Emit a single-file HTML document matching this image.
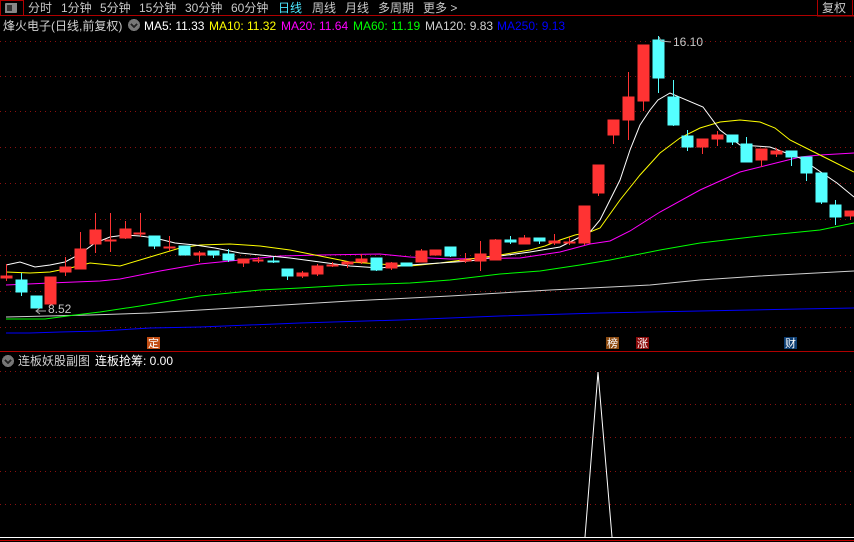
<!DOCTYPE html>
<html><head><meta charset="utf-8"><style>
html,body{margin:0;padding:0;background:#000;}
body{width:854px;height:542px;overflow:hidden;position:relative;font-family:"Liberation Sans","Noto Sans CJK SC",sans-serif;}
svg{position:absolute;left:0;top:0;}
text{font-family:"Liberation Sans","Noto Sans CJK SC",sans-serif;font-size:12px;}
</style></head><body>
<svg width="854" height="542" viewBox="0 0 854 542" shape-rendering="crispEdges">
<!-- top bar -->
<rect x="0.5" y="0.5" width="23" height="15" fill="none" stroke="#b00000"/>
<rect x="5" y="3" width="12" height="10" fill="#888" rx="1"/><rect x="7" y="5" width="5" height="6" fill="#333"/>
<line x1="0" y1="15.5" x2="854" y2="15.5" stroke="#b00000"/>
<rect x="817.5" y="-1" width="40" height="17" fill="none" stroke="#b00000"/>
<line x1="852.5" y1="0" x2="852.5" y2="15" stroke="#b00000"/>
<g fill="#c8c8c8">
<text x="28" y="12">分时</text><text x="61" y="12">1分钟</text><text x="100" y="12">5分钟</text><text x="139" y="12">15分钟</text><text x="185" y="12">30分钟</text><text x="231" y="12">60分钟</text>
<text x="278" y="12" fill="#4de8ff">日线</text><text x="312" y="12">周线</text><text x="345" y="12">月线</text><text x="378" y="12">多周期</text><text x="423" y="12">更多 &gt;</text>
<text x="822" y="12">复权</text>
</g>
<!-- title row -->
<text x="3" y="30" fill="#d0d0d0">烽火电子(日线,前复权)</text>
<circle cx="134" cy="25" r="6" fill="#777"/><path d="M131 24 L134 27 L137 24" stroke="#222" stroke-width="1.5" fill="none"/>
<text x="144" y="30" fill="#fff">MA5: 11.33</text>
<text x="209" y="30" fill="#ffff00">MA10: 11.32</text>
<text x="281" y="30" fill="#ff00ff">MA20: 11.64</text>
<text x="353" y="30" fill="#00ff00">MA60: 11.19</text>
<text x="425" y="30" fill="#d0d0d0">MA120: 9.83</text>
<text x="497" y="30" fill="#0000ff">MA250: 9.13</text>
<!-- grid -->
<g stroke="#8b1010" stroke-dasharray="1,4">
<line x1="0" y1="41.5" x2="854" y2="41.5"/><line x1="0" y1="76.5" x2="854" y2="76.5"/><line x1="0" y1="111.5" x2="854" y2="111.5"/><line x1="0" y1="147.5" x2="854" y2="147.5"/><line x1="0" y1="183.5" x2="854" y2="183.5"/><line x1="0" y1="219.5" x2="854" y2="219.5"/><line x1="0" y1="255.5" x2="854" y2="255.5"/><line x1="0" y1="291.5" x2="854" y2="291.5"/><line x1="0" y1="327.5" x2="854" y2="327.5"/>
<line x1="0" y1="371.5" x2="854" y2="371.5"/><line x1="0" y1="404.5" x2="854" y2="404.5"/><line x1="0" y1="437.5" x2="854" y2="437.5"/><line x1="0" y1="471.5" x2="854" y2="471.5"/><line x1="0" y1="504.5" x2="854" y2="504.5"/>
</g>
<!-- MA lines -->
<g fill="none" stroke-width="1" shape-rendering="auto">
<polyline stroke="#0000ff" points="6,333 30,333 60,332 100,331 150,328 200,327 300,323 400,320 500,316 600,313 700,311 800,309 854,308"/>
<polyline stroke="#d0d0d0" points="6,317 90,315 150,313 250,307 350,301 450,296 550,290 650,285 700,280 760,276 854,271"/>
<polyline stroke="#00ff00" points="6,319 45,319 60,317 75,315 100,312 140,306 200,296 260,290 300,288 350,285 410,283 450,280 500,274 540,271 580,265 610,260 660,250 700,243 760,236 820,230 854,223"/>
<polyline stroke="#ff00ff" points="6,285 50,283 100,281 120,279 160,271 200,264 240,260 280,256 320,255 380,254 410,257 450,259 520,258 560,252 590,244 610,241 630,231 660,212 700,190 740,172 780,162 800,157 820,155 854,153"/>
<polyline stroke="#ffff00" points="6,272 30,273 50,272 70,268 90,263 120,266 150,257 180,248 200,245 230,244 260,246 290,250 320,256 350,262 380,264 410,266 440,263 470,259 500,255 530,250 545,246 560,240 575,235 590,232 600,228 620,200 640,175 660,153 680,138 700,128 720,122 740,120 760,122 775,128 790,140 810,150 830,160 854,172"/>
<polyline stroke="#ffffff" points="6,265 20,262 35,267 50,265 65,262 80,254 95,243 110,237 125,235 140,236 155,238 175,243 195,245 215,248 240,253 260,255 290,258 320,262 350,266 380,268 410,265 440,263 470,261 500,256 530,252 560,247 570,242 590,232 600,220 620,180 630,150 640,125 650,110 658,100 670,93 703,107 720,130 740,145 770,147 800,158 837,183 854,197"/>
</g>
<!-- candles -->
<g id="c">
<!-- red -->
<g fill="#ff3333" stroke="#ff3333">
<line x1="6.5" y1="264" x2="6.5" y2="281"/><rect x="1" y="276" width="11" height="2"/>
<line x1="50.5" y1="277" x2="50.5" y2="306"/><rect x="45" y="277" width="11" height="27"/>
<line x1="65.5" y1="257" x2="65.5" y2="276"/><rect x="60" y="267" width="11" height="5"/>
<line x1="80.5" y1="232" x2="80.5" y2="269"/><rect x="75" y="249" width="11" height="20"/>
<line x1="95.5" y1="213" x2="95.5" y2="253"/><rect x="90" y="230" width="11" height="14"/>
<line x1="110.5" y1="213" x2="110.5" y2="252"/><rect x="105" y="240" width="11" height="1"/>
<line x1="125.5" y1="221" x2="125.5" y2="239"/><rect x="120" y="229" width="11" height="9"/>
<line x1="140.5" y1="213" x2="140.5" y2="237"/><rect x="134" y="233" width="11" height="1"/>
<line x1="169.5" y1="236" x2="169.5" y2="251"/><rect x="164" y="247" width="11" height="1"/>
<line x1="199.5" y1="251" x2="199.5" y2="262"/><rect x="194" y="253" width="11" height="2"/>
<line x1="243.5" y1="259" x2="243.5" y2="267"/><rect x="238" y="259" width="11" height="4"/>
<line x1="258.5" y1="257" x2="258.5" y2="263"/><rect x="253" y="260" width="10" height="1"/>
<line x1="302.5" y1="271" x2="302.5" y2="278"/><rect x="297" y="273" width="11" height="3"/>
<line x1="317.5" y1="264" x2="317.5" y2="276"/><rect x="312" y="266" width="11" height="8"/>
<line x1="332.5" y1="262" x2="332.5" y2="267"/><rect x="327" y="265" width="11" height="1"/>
<line x1="347.5" y1="262" x2="347.5" y2="268"/><rect x="342" y="262" width="11" height="2"/>
<line x1="361.5" y1="254" x2="361.5" y2="264"/><rect x="356" y="259" width="11" height="3"/>
<line x1="391.5" y1="262" x2="391.5" y2="270"/><rect x="386" y="263" width="11" height="5"/>
<line x1="421.5" y1="249" x2="421.5" y2="262"/><rect x="416" y="251" width="11" height="11"/>
<rect x="430" y="250" width="11" height="5"/>
<line x1="465.5" y1="253" x2="465.5" y2="263"/><rect x="460" y="260" width="11" height="1"/>
<line x1="480.5" y1="241" x2="480.5" y2="271"/><rect x="475" y="254" width="11" height="7"/>
<line x1="495.5" y1="239" x2="495.5" y2="260"/><rect x="490" y="240" width="11" height="20"/>
<line x1="524.5" y1="235" x2="524.5" y2="244"/><rect x="519" y="238" width="11" height="6"/>
<line x1="554.5" y1="234" x2="554.5" y2="245"/><rect x="549" y="241" width="11" height="2"/>
<line x1="569.5" y1="237" x2="569.5" y2="245"/><rect x="564" y="242" width="11" height="1"/>
<line x1="584.5" y1="206" x2="584.5" y2="245"/><rect x="579" y="206" width="11" height="37"/>
<line x1="598.5" y1="165" x2="598.5" y2="196"/><rect x="593" y="165" width="11" height="28"/>
<line x1="613.5" y1="120" x2="613.5" y2="144"/><rect x="608" y="120" width="11" height="15"/>
<line x1="628.5" y1="72" x2="628.5" y2="140"/><rect x="623" y="97" width="11" height="23"/>
<line x1="643.5" y1="45" x2="643.5" y2="111"/><rect x="638" y="45" width="11" height="56"/>
<line x1="702.5" y1="139" x2="702.5" y2="154"/><rect x="697" y="139" width="11" height="8"/>
<line x1="717.5" y1="131" x2="717.5" y2="146"/><rect x="712" y="135" width="11" height="4"/>
<line x1="761.5" y1="149" x2="761.5" y2="167"/><rect x="756" y="149" width="11" height="11"/>
<line x1="776.5" y1="148" x2="776.5" y2="157"/><rect x="771" y="151" width="11" height="3"/>
<line x1="850.5" y1="211" x2="850.5" y2="220"/><rect x="845" y="211" width="11" height="5"/>
</g>
<!-- cyan -->
<g fill="#54ffff" stroke="#54ffff">
<line x1="21.5" y1="273" x2="21.5" y2="296"/><rect x="16" y="280" width="11" height="12"/>
<rect x="31" y="296" width="11" height="12"/>
<line x1="154.5" y1="236" x2="154.5" y2="249"/><rect x="149" y="236" width="11" height="10"/>
<rect x="179" y="246" width="11" height="9"/>
<line x1="213.5" y1="251" x2="213.5" y2="258"/><rect x="208" y="251" width="11" height="4"/>
<line x1="228.5" y1="249" x2="228.5" y2="262"/><rect x="223" y="254" width="11" height="6"/>
<line x1="273.5" y1="257" x2="273.5" y2="263"/><rect x="268" y="261" width="11" height="1"/>
<line x1="287.5" y1="269" x2="287.5" y2="280"/><rect x="282" y="269" width="11" height="7"/>
<line x1="376.5" y1="258" x2="376.5" y2="271"/><rect x="371" y="258" width="11" height="12"/>
<rect x="401" y="263" width="11" height="3"/>
<line x1="450.5" y1="247" x2="450.5" y2="257"/><rect x="445" y="247" width="11" height="9"/>
<line x1="510.5" y1="236" x2="510.5" y2="244"/><rect x="505" y="240" width="11" height="2"/>
<line x1="539.5" y1="238" x2="539.5" y2="244"/><rect x="534" y="238" width="11" height="3"/>
<line x1="658.5" y1="36" x2="658.5" y2="93"/><rect x="653" y="40" width="11" height="38"/>
<line x1="673.5" y1="80" x2="673.5" y2="126"/><rect x="668" y="97" width="11" height="28"/>
<line x1="687.5" y1="130" x2="687.5" y2="151"/><rect x="682" y="136" width="11" height="11"/>
<line x1="732.5" y1="135" x2="732.5" y2="145"/><rect x="727" y="135" width="11" height="7"/>
<line x1="746.5" y1="137" x2="746.5" y2="162"/><rect x="741" y="144" width="11" height="18"/>
<line x1="791.5" y1="151" x2="791.5" y2="166"/><rect x="786" y="151" width="11" height="6"/>
<line x1="806.5" y1="157" x2="806.5" y2="181"/><rect x="801" y="157" width="11" height="16"/>
<line x1="821.5" y1="173" x2="821.5" y2="204"/><rect x="816" y="173" width="11" height="29"/>
<line x1="835.5" y1="200" x2="835.5" y2="225"/><rect x="830" y="205" width="11" height="12"/>
</g>
</g>
<!-- labels -->
<g fill="#c8c8c8"><text x="48" y="313">8.52</text><text x="673" y="46">16.10</text></g>
<path d="M36 311 L46 311 M40 308 L36 311 L40 314" stroke="#aaa" fill="none" shape-rendering="auto"/>
<path d="M661 41 L671 42 M659 37 L661 41" stroke="#aaa" fill="none" shape-rendering="auto"/>
<rect x="147" y="337" width="13" height="12" fill="#c24e14"/><text x="148" y="347" fill="#fff" style="font-size:11px">定</text>
<rect x="606" y="337" width="13" height="12" fill="#8b4a10"/><text x="607" y="347" fill="#fff" style="font-size:11px">榜</text>
<rect x="636" y="337" width="13" height="12" fill="#8a0a0a"/><text x="637" y="347" fill="#fff" style="font-size:11px">涨</text>
<rect x="784" y="337" width="13" height="12" fill="#0c3d72"/><text x="785" y="347" fill="#fff" style="font-size:11px">财</text>
<!-- separator -->
<line x1="0" y1="351.5" x2="854" y2="351.5" stroke="#b00000"/>
<circle cx="8" cy="361" r="6" fill="#777"/><path d="M5 360 L8 363 L11 360" stroke="#222" stroke-width="1.5" fill="none"/>
<text x="18" y="365" fill="#d0d0d0">连板妖股副图</text>
<text x="95" y="365" fill="#fff">连板抢筹: 0.00</text>
<!-- bottom -->
<polyline points="585,537 598,372 612,537" fill="none" stroke="#fff" shape-rendering="auto"/>
<line x1="0" y1="537.5" x2="854" y2="537.5" stroke="#fff"/>
<line x1="0" y1="540.5" x2="854" y2="540.5" stroke="#c00000"/>
</svg>
</body></html>
